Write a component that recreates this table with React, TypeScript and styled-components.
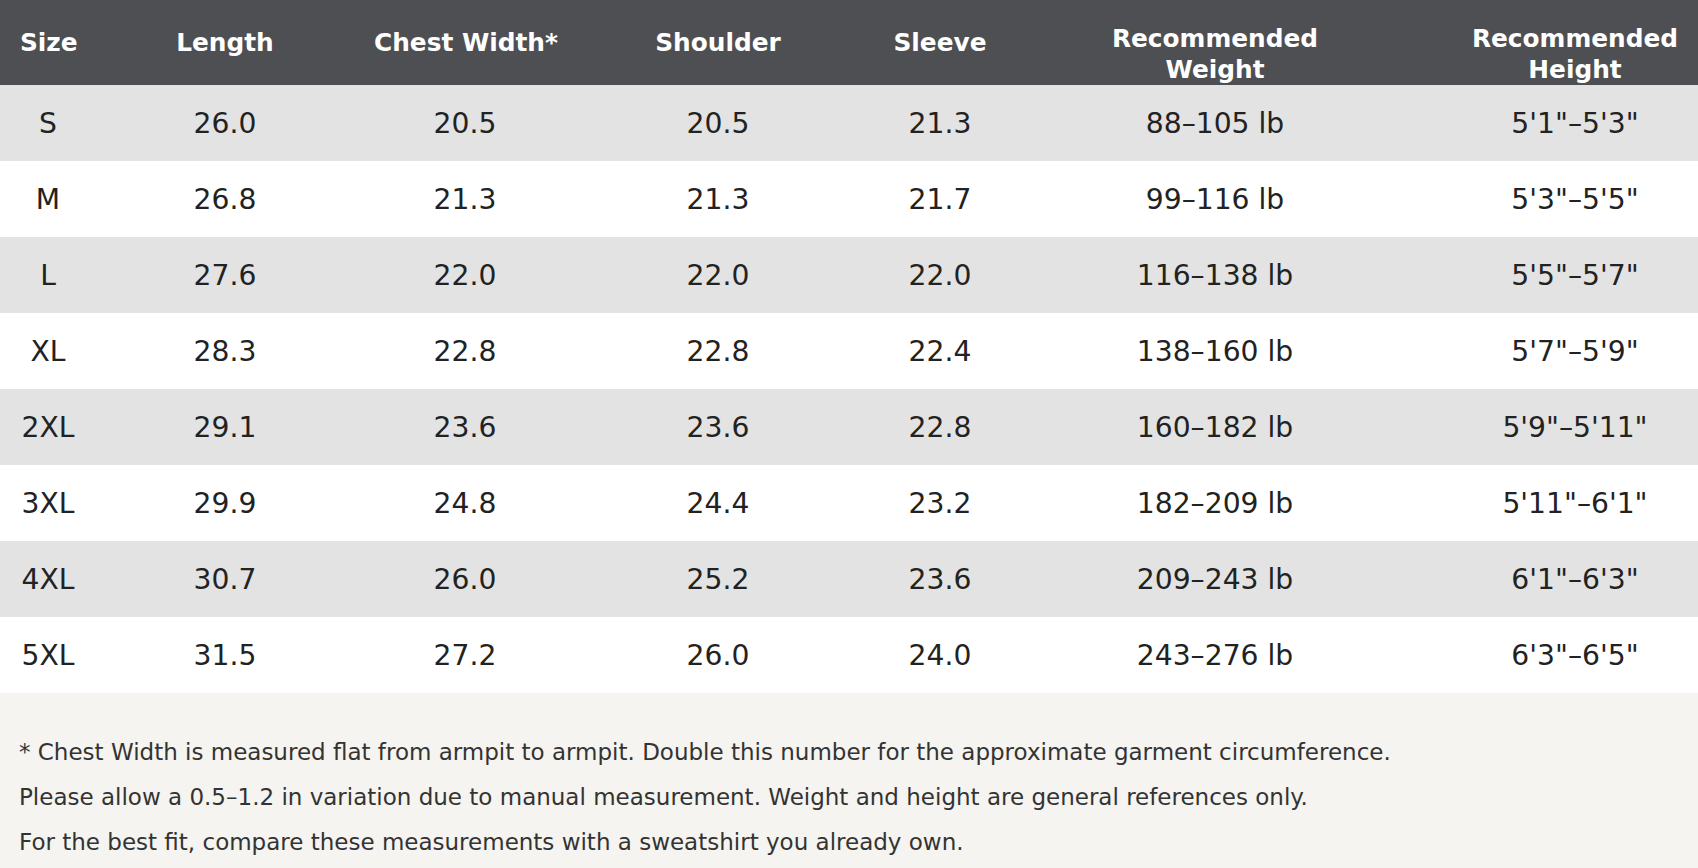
import React from "react";
import styled, { createGlobalStyle } from "styled-components";

const GlobalStyle = createGlobalStyle`
  html, body {
    margin: 0;
    padding: 0;
    background: #ffffff;
    font-family: "DejaVu Sans", Verdana, sans-serif;
    overflow: hidden;
  }
`;

const Page = styled.div`
  width: 100%;
`;

const TableWrap = styled.div`
  width: 100%;
  overflow: hidden;
`;

const Table = styled.table`
  width: 1740px;
  table-layout: fixed;
  border-collapse: collapse;
  border-spacing: 0;
`;

const HeadCell = styled.th<{ $twoLine?: boolean }>`
  height: 85px;
  padding: ${({ $twoLine }) => ($twoLine ? "24px 20px 0" : "0 20px")};
  box-sizing: border-box;
  background-color: #4e4f52;
  color: #ffffff;
  font-size: 24.8px;
  font-weight: bold;
  line-height: ${({ $twoLine }) => ($twoLine ? "30.5px" : "31px")};
  text-align: center;
  vertical-align: middle;
  white-space: nowrap;
`;

const BodyRow = styled.tr<{ $shaded: boolean }>`
  background-color: ${({ $shaded }) => ($shaded ? "#e3e3e3" : "#ffffff")};
`;

const Cell = styled.td`
  height: 76px;
  padding: 0 20px;
  box-sizing: border-box;
  color: #222222;
  font-size: 28.2px;
  text-align: center;
  vertical-align: middle;
  white-space: nowrap;
`;

const Notes = styled.div`
  background-color: #f5f4f0;
  padding: 37px 19px 20px;
  display: flex;
  flex-direction: column;
`;

const Note = styled.p`
  margin: 0;
  color: #333333;
  font-size: 23px;
  line-height: 45px;
`;

const columns = [96, 258, 222, 284, 160, 390, 330];

const headers: { label: React.ReactNode; twoLine?: boolean }[] = [
  { label: "Size" },
  { label: "Length" },
  { label: "Chest Width*" },
  { label: "Shoulder" },
  { label: "Sleeve" },
  {
    label: (
      <>
        Recommended
        <br />
        Weight
      </>
    ),
    twoLine: true,
  },
  {
    label: (
      <>
        Recommended
        <br />
        Height
      </>
    ),
    twoLine: true,
  },
];

const rows = [
  ["S", "26.0", "20.5", "20.5", "21.3", "88–105 lb", `5'1"–5'3"`],
  ["M", "26.8", "21.3", "21.3", "21.7", "99–116 lb", `5'3"–5'5"`],
  ["L", "27.6", "22.0", "22.0", "22.0", "116–138 lb", `5'5"–5'7"`],
  ["XL", "28.3", "22.8", "22.8", "22.4", "138–160 lb", `5'7"–5'9"`],
  ["2XL", "29.1", "23.6", "23.6", "22.8", "160–182 lb", `5'9"–5'11"`],
  ["3XL", "29.9", "24.8", "24.4", "23.2", "182–209 lb", `5'11"–6'1"`],
  ["4XL", "30.7", "26.0", "25.2", "23.6", "209–243 lb", `6'1"–6'3"`],
  ["5XL", "31.5", "27.2", "26.0", "24.0", "243–276 lb", `6'3"–6'5"`],
];

const notes = [
  "* Chest Width is measured flat from armpit to armpit. Double this number for the approximate garment circumference.",
  "Please allow a 0.5–1.2 in variation due to manual measurement. Weight and height are general references only.",
  "For the best fit, compare these measurements with a sweatshirt you already own.",
];

const App: React.FC = () => (
  <Page>
    <GlobalStyle />
    <TableWrap>
      <Table>
        <colgroup>
          {columns.map((w, i) => (
            <col key={i} style={{ width: w }} />
          ))}
        </colgroup>
        <thead>
          <tr>
            {headers.map((h, i) => (
              <HeadCell key={i} $twoLine={h.twoLine}>
                {h.label}
              </HeadCell>
            ))}
          </tr>
        </thead>
        <tbody>
          {rows.map((row, r) => (
            <BodyRow key={row[0]} $shaded={r % 2 === 0}>
              {row.map((value, c) => (
                <Cell key={c}>{value}</Cell>
              ))}
            </BodyRow>
          ))}
        </tbody>
      </Table>
    </TableWrap>
    <Notes>
      {notes.map((n) => (
        <Note key={n}>{n}</Note>
      ))}
    </Notes>
  </Page>
);

export default App;
